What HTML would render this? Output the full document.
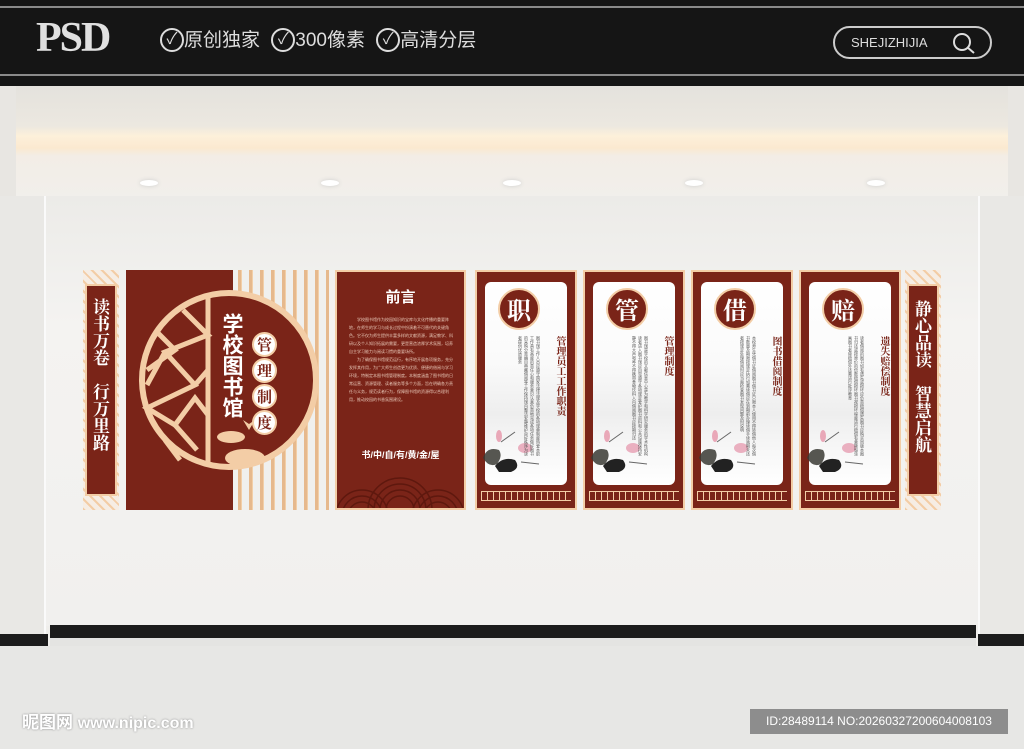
<!DOCTYPE html>
<html><head><meta charset="utf-8"><style>
*{margin:0;padding:0;box-sizing:border-box}
body{width:1024px;height:749px;overflow:hidden;position:relative;background:#efeeeb;font-family:"Liberation Sans","Noto Sans CJK SC",sans-serif}
.a{position:absolute}
.red{background:#7a2418}
.vt{writing-mode:vertical-rl;font-family:"Liberation Serif","Noto Serif CJK SC",serif;font-weight:bold}
.pan{position:absolute;top:270px;width:102px;height:240px;background:#7a2418;border:2px solid #f3cda6}
.inner{position:absolute;left:8px;top:10px;width:82px;height:203px;background:linear-gradient(#fff 0%,#fafafa 40%,#eee 65%,#f6f6f6 80%,#fff 100%);border-radius:6px}
.circ{position:absolute;left:21px;top:16px;width:42px;height:42px;border-radius:50%;background:#7a2418;border:2px solid #f3cda6;color:#fff;font:bold 24px/38px "Noto Serif CJK SC",serif;text-align:center}
.tit{position:absolute;top:64px;right:8px;color:#7a2418;font-size:10px;line-height:11px;writing-mode:vertical-rl;font-weight:bold;font-family:"Noto Serif CJK SC",serif}
.body{position:absolute;top:64px;left:6px;height:120px;writing-mode:vertical-rl;font-size:4px;line-height:6px;color:#555;overflow:hidden;width:58px}
.fret{position:absolute;left:4px;right:4px;top:219px;height:10px;border-top:1px solid #f3cda6;border-bottom:1px solid #f3cda6;background:repeating-linear-gradient(90deg,#f3cda6 0 1px,transparent 1px 6px)}
.lotus{position:absolute;left:4px;top:150px;width:64px;height:50px}
.side{position:absolute;top:270px;width:36px;height:240px}
.ck{display:inline-block;width:24px;height:24px;border:2px solid #ddd;border-radius:50%;text-align:center;font-size:16px;line-height:20px;vertical-align:top}
</style></head><body>
<div class="a" style="left:0;top:0;width:1024px;height:86px;background:#151515"></div>
<div class="a" style="left:0;top:6px;width:1024px;height:2px;background:#8a8a8a"></div>
<div class="a" style="left:0;top:74px;width:1024px;height:2px;background:#8a8a8a"></div>
<div class="a" style="left:36px;top:16px;color:#e0e0e0;font:bold 42px/44px 'Liberation Serif',serif;letter-spacing:-2px">PSD</div>
<div class="a" style="left:160px;top:28px;color:#ddd;font-size:19px;line-height:26px;white-space:nowrap">
<span class="ck">✓</span>原创独家
<span class="ck" style="margin-left:6px">✓</span>300像素
<span class="ck" style="margin-left:6px">✓</span>高清分层</div>
<div class="a" style="left:833px;top:26px;width:159px;height:33px;border:2px solid #ccc;border-radius:17px;color:#ddd;font-size:13px;line-height:29px;padding-left:16px">SHEJIZHIJIA</div>
<svg class="a" style="left:950px;top:30px" width="28" height="26"><circle cx="12" cy="12" r="8" fill="none" stroke="#ddd" stroke-width="2"/><line x1="17" y1="17" x2="24" y2="23" stroke="#ddd" stroke-width="2"/></svg>
<div class="a" style="left:0;top:86px;width:1024px;height:110px;background:linear-gradient(#e4e2dd 0,#ece8e0 40px,#fdf0da 50px,#fbe9d0 62px,#f3ede6 70px,#f1efeb 100%)"></div>
<div class="a" style="left:0;top:86px;width:16px;height:110px;background:#e8e6e2"></div>
<div class="a" style="left:1008px;top:86px;width:16px;height:110px;background:#e8e6e2"></div>
<div class="a" style="left:140px;top:180px;width:18px;height:6px;border-radius:50%;background:#fff;box-shadow:0 0 4px #ccc"></div>
<div class="a" style="left:321px;top:180px;width:18px;height:6px;border-radius:50%;background:#fff;box-shadow:0 0 4px #ccc"></div>
<div class="a" style="left:503px;top:180px;width:18px;height:6px;border-radius:50%;background:#fff;box-shadow:0 0 4px #ccc"></div>
<div class="a" style="left:685px;top:180px;width:18px;height:6px;border-radius:50%;background:#fff;box-shadow:0 0 4px #ccc"></div>
<div class="a" style="left:867px;top:180px;width:18px;height:6px;border-radius:50%;background:#fff;box-shadow:0 0 4px #ccc"></div>
<div class="a" style="left:0;top:196px;width:1024px;height:430px;background:linear-gradient(#ecebe8,#f4f3f1 30%,#f1f0ee)"></div>
<div class="a" style="left:0;top:196px;width:46px;height:440px;background:#e9e8e5;border-right:2px solid #fafafa"></div>
<div class="a" style="left:978px;top:196px;width:46px;height:440px;background:#e9e8e5;border-left:2px solid #fafafa"></div>
<div class="a" style="left:50px;top:625px;width:926px;height:13px;background:#1c1c1c"></div>
<div class="a" style="left:0;top:634px;width:48px;height:12px;background:#1c1c1c"></div>
<div class="a" style="left:978px;top:634px;width:46px;height:12px;background:#1c1c1c"></div>
<div class="a" style="left:0;top:646px;width:1024px;height:103px;background:#e7e7e5"></div>
<div class="a" style="left:50px;top:638px;width:926px;height:8px;background:#e4e4e2"></div>
<div class="a" style="left:22px;top:708px;color:#fff;font-size:17px;font-weight:bold;text-shadow:0 0 2px #888">昵图网 <span style="font-size:16px">www.nipic.com</span></div>
<div class="a" style="left:750px;top:709px;width:258px;height:25px;background:#8d8d8d;color:#fff;font-size:12px;line-height:25px;text-align:center">ID:28489114 NO:20260327200604008103</div>

<div class="side" style="left:83px">
 <div class="a" style="left:0;top:0;width:36px;height:240px;background:repeating-linear-gradient(45deg,#f3cda6 0 2px,#f6ede4 2px 7px)"></div>
 <div class="a red" style="left:2px;top:14px;width:32px;height:212px;border:2px solid #f3cda6"></div>
 <div class="a vt" style="left:8px;top:28px;color:#fff;font-size:17px;line-height:20px;font-family:'Noto Serif CJK SC',serif">读书万卷　行万里路</div>
</div>
<div class="a red" style="left:126px;top:270px;width:107px;height:240px"></div>
<div class="a" style="left:233px;top:270px;width:96px;height:240px;background:repeating-linear-gradient(90deg,#f0f0ee 0 5px,#e6b98d 5px 8px,#f2cfa8 8px 9px,#f0f0ee 9px 11px)"></div>
<svg class="a" style="left:135px;top:290px" width="190" height="182">
 <circle cx="94" cy="90" r="87" fill="#7a2418" stroke="#f3cda6" stroke-width="6"/>
 <g stroke="#f3cda6" stroke-width="5" fill="none">
  <line x1="73" y1="5" x2="73" y2="176"/>
  <polyline points="48,20 73,45 30,62 60,95 12,118 40,135 60,108 73,125"/>
  <polyline points="20,40 40,60 12,80"/>
  <line x1="30" y1="62" x2="12" y2="95"/>
  <polyline points="60,95 73,80"/>
  <polyline points="40,135 62,160"/>
  <polyline points="30,150 45,170"/>
 </g>
 <g fill="#f3cda6">
  <ellipse cx="110" cy="168" rx="20" ry="9"/><ellipse cx="96" cy="147" rx="14" ry="6"/><path d="M108 130 l6 10 l6 -10 l-6 4z"/>
 </g>
</svg>
<div class="a vt" style="left:221px;top:313px;color:#fff;font-size:21px;line-height:24px;font-family:'Noto Sans CJK SC',sans-serif">学校图书馆</div>
<div class="a" style="left:252px;top:332px;width:30px">
 <div style="width:25px;height:25px;border-radius:50%;background:#fff;border:2px solid #f3cda6;color:#7a2418;font:bold 15px/21px 'Noto Serif CJK SC',serif;text-align:center">管</div>
 <div style="width:25px;height:25px;border-radius:50%;background:#fff;border:2px solid #f3cda6;color:#7a2418;font:bold 15px/21px 'Noto Serif CJK SC',serif;text-align:center;margin-top:1px">理</div>
 <div style="width:25px;height:25px;border-radius:50%;background:#fff;border:2px solid #f3cda6;color:#7a2418;font:bold 15px/21px 'Noto Serif CJK SC',serif;text-align:center;margin-top:1px">制</div>
 <div style="width:25px;height:25px;border-radius:50%;background:#fff;border:2px solid #f3cda6;color:#7a2418;font:bold 15px/21px 'Noto Serif CJK SC',serif;text-align:center;margin-top:1px">度</div>
</div>
<div class="a red" style="left:335px;top:270px;width:131px;height:240px;border:2px solid #f3cda6;overflow:hidden">
 <div class="a" style="left:0;width:127px;top:14px;text-align:center;color:#fff;font:bold 15px 'Noto Sans CJK SC',sans-serif">前言</div>
 <div class="a" style="left:12px;top:44px;width:104px;color:#e8c8b8;font-size:4px;line-height:8px">　　学校图书馆作为校园知识的宝库与文化传播的重要阵地，在师生的学习与成长过程中扮演着不可替代的关键角色。它不仅为师生提供丰富多样的文献资源，满足教学、科研以及个人知识拓展的需要，更是营造浓厚学术氛围，培养自主学习能力与阅读习惯的重要场所。<br>　　为了确保图书馆规范运行，有序地开展各项服务，充分发挥其作用，为广大师生创造更为优质、便捷的借阅与学习环境，特制定本图书馆管理制度。本制度涵盖了图书馆的日常运营、资源管理、读者服务等多个方面，旨在明确各方责任与义务，规范读者行为，保障图书馆的资源得以合理利用，推动校园的书香氛围建设。</div>
 <div class="a" style="left:0;width:127px;top:176px;text-align:center;color:#fff;font-size:9px;font-weight:bold">书/中/自/有/黄/金/屋</div>
 <svg class="a" style="left:0;top:196px" width="127" height="42"><g fill="none" stroke="#5e180e" stroke-width="1.5">
  <circle cx="63" cy="42" r="32"/><circle cx="63" cy="42" r="26"/><circle cx="63" cy="42" r="20"/><circle cx="63" cy="42" r="14"/>
  <circle cx="25" cy="48" r="26"/><circle cx="25" cy="48" r="20"/><circle cx="25" cy="48" r="14"/>
  <circle cx="101" cy="48" r="26"/><circle cx="101" cy="48" r="20"/><circle cx="101" cy="48" r="14"/></g></svg>
</div>

<div class="pan" style="left:475px"><div class="inner"></div>
 <svg class="lotus" viewBox="0 0 64 50"><path d="M2 36 Q6 24 18 28 Q22 34 16 42 Q8 46 2 36z" fill="#3a3a34" opacity=".85"/><path d="M14 44 Q22 34 34 38 Q40 46 30 50 L18 50z" fill="#222"/><ellipse cx="44" cy="26" rx="7" ry="5" fill="#eab0c0"/><ellipse cx="18" cy="14" rx="3" ry="6" fill="#e9a8b8"/><path d="M20 20 L34 10 M40 40 L58 42" stroke="#666" stroke-width="1"/></svg>
 <div class="circ">职</div><div class="tit">管理员工工作职责</div>
 <div class="body">图书馆工作人员应遵守国家法律法规及学校的各项规章制度热爱本职工作具有高度的责任心和服务意识认真负责地完成各项任务做好图书的采购分类编目典藏借阅等工作保持馆内整洁安静维护良好秩序为读者提供优质服务</div>
 <div class="fret"></div></div>
<div class="pan" style="left:583px"><div class="inner"></div>
 <svg class="lotus" viewBox="0 0 64 50"><path d="M2 36 Q6 24 18 28 Q22 34 16 42 Q8 46 2 36z" fill="#3a3a34" opacity=".85"/><path d="M14 44 Q22 34 34 38 Q40 46 30 50 L18 50z" fill="#222"/><ellipse cx="44" cy="26" rx="7" ry="5" fill="#eab0c0"/><ellipse cx="18" cy="14" rx="3" ry="6" fill="#e9a8b8"/><path d="M20 20 L34 10 M40 40 L58 42" stroke="#666" stroke-width="1"/></svg>
 <div class="circ">管</div><div class="tit">管理制度</div>
 <div class="body">图书馆是学校的文献信息中心是为教学和科学研究服务的学术性机构读者进入图书馆应自觉遵守各项规定爱护图书资料和公共设施保持安静不得大声喧哗不得携带食物饮料入内借阅图书应按期归还</div>
 <div class="fret"></div></div>
<div class="pan" style="left:691px"><div class="inner"></div>
 <svg class="lotus" viewBox="0 0 64 50"><path d="M2 36 Q6 24 18 28 Q22 34 16 42 Q8 46 2 36z" fill="#3a3a34" opacity=".85"/><path d="M14 44 Q22 34 34 38 Q40 46 30 50 L18 50z" fill="#222"/><ellipse cx="44" cy="26" rx="7" ry="5" fill="#eab0c0"/><ellipse cx="18" cy="14" rx="3" ry="6" fill="#e9a8b8"/><path d="M20 20 L34 10 M40 40 L58 42" stroke="#666" stroke-width="1"/></svg>
 <div class="circ">借</div><div class="tit">图书借阅制度</div>
 <div class="body">本校师生凭借书证借阅图书借书证只限本人使用不得转借他人每次借书数量及期限按规定执行如需续借应在到期前办理续借手续逾期未还者按规定处理借阅时应当面检查图书发现问题及时说明</div>
 <div class="fret"></div></div>
<div class="pan" style="left:799px"><div class="inner"></div>
 <svg class="lotus" viewBox="0 0 64 50"><path d="M2 36 Q6 24 18 28 Q22 34 16 42 Q8 46 2 36z" fill="#3a3a34" opacity=".85"/><path d="M14 44 Q22 34 34 38 Q40 46 30 50 L18 50z" fill="#222"/><ellipse cx="44" cy="26" rx="7" ry="5" fill="#eab0c0"/><ellipse cx="18" cy="14" rx="3" ry="6" fill="#e9a8b8"/><path d="M20 20 L34 10 M40 40 L58 42" stroke="#666" stroke-width="1"/></svg>
 <div class="circ">赔</div><div class="tit">遗失赔偿制度</div>
 <div class="body">读者借阅的图书如有遗失或损坏应负责赔偿遗失图书应购买同版本图书归还或按原价的倍数赔偿损坏图书视损坏程度进行赔偿有意撕毁涂画图书者除赔偿外还需进行批评教育</div>
 <div class="fret"></div></div>

<div class="side" style="left:905px">
 <div class="a" style="left:0;top:0;width:36px;height:240px;background:repeating-linear-gradient(45deg,#f3cda6 0 2px,#f6ede4 2px 7px)"></div>
 <div class="a red" style="left:2px;top:14px;width:32px;height:212px;border:2px solid #f3cda6"></div>
 <div class="a vt" style="left:8px;top:30px;color:#fff;font-size:17px;line-height:20px;font-family:'Noto Serif CJK SC',serif">静心品读　智慧启航</div>
</div>
</body></html>
